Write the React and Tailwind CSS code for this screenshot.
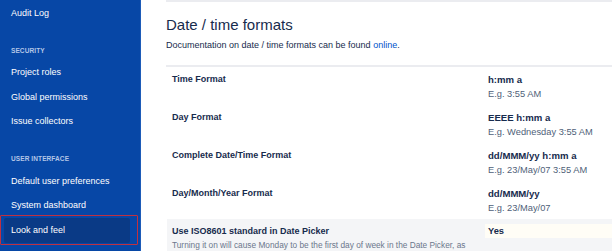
import React from "react";

const font = { fontFamily: '"Liberation Sans", Arial, sans-serif' };

function NavItem({ children, selected }) {
  return (
    <div
      className={
        "relative h-[24.5px] flex items-center pl-[7px] text-[9px] text-white rounded-[2px] " +
        (selected ? "bg-[#0a3a86]" : "")
      }
    >
      {children}
      {selected && (
        <div className="absolute left-[-4px] right-[-8px] top-[-3.5px] bottom-[-2px] border-[1.5px] border-[#c1303f] rounded-[1px] pointer-events-none" />
      )}
    </div>
  );
}

function NavHeading({ children }) {
  return (
    <div className="mt-[20px] mb-[5px] h-[10px] flex items-center pl-[7px] text-[6.5px] font-bold tracking-[0.1px] text-[#b3c6e6]">
      {children}
    </div>
  );
}

function Row({ label, value, example }) {
  return (
    <div className="flex h-[38px] pt-[6px] pb-[4px]">
      <div className="w-[319px] shrink-0 pl-[6px] text-[9px] font-bold text-[#172b4d] leading-[12px]">
        {label}
      </div>
      <div className="pl-[3px] leading-[14px]">
        <div className="text-[9.6px] font-bold text-[#172b4d]">{value}</div>
        <div className="text-[9.3px] text-[#505f79]">{example}</div>
      </div>
    </div>
  );
}

export default function App() {
  return (
    <div style={font} className="flex w-[612px] h-[251px] overflow-hidden bg-white">
      <div className="w-[141px] shrink-0 bg-[#0747a6] pt-[1px] pl-[4px] pr-[10px] border-r border-[#1d5bb8]">
        <NavItem>Audit Log</NavItem>
        <NavHeading>SECURITY</NavHeading>
        <NavItem>Project roles</NavItem>
        <NavItem>Global permissions</NavItem>
        <NavItem>Issue collectors</NavItem>
        <NavHeading>USER INTERFACE</NavHeading>
        <NavItem>Default user preferences</NavItem>
        <NavItem>System dashboard</NavItem>
        <NavItem selected>Look and feel</NavItem>
      </div>
      <div className="flex-1 min-w-0 pl-[25px]">
        <div className="h-[2px] bg-[#ebecf0]" />
        <div className="h-[65px] border-b-2 border-[#ebecf0]">
          <h1 className="pt-[12px] text-[15px] leading-[22px] text-[#172b4d]">
            Date / time formats
          </h1>
          <p className="mt-[2px] text-[9px] leading-[14px] text-[#172b4d]">
            Documentation on date / time formats can be found{" "}
            <span className="text-[#0052cc]">online</span>.
          </p>
        </div>
        <Row label="Time Format" value="h:mm a" example="E.g. 3:55 AM" />
        <Row label="Day Format" value="EEEE h:mm a" example="E.g. Wednesday 3:55 AM" />
        <Row
          label="Complete Date/Time Format"
          value="dd/MMM/yy h:mm a"
          example="E.g. 23/May/07 3:55 AM"
        />
        <Row label="Day/Month/Year Format" value="dd/MMM/yy" example="E.g. 23/May/07" />
        <div className="bg-[#f4f5f7] ml-[1px] pt-[5px] h-[40px]">
          <div className="flex">
            <div className="w-[318px] shrink-0 pl-[5px] text-[9px] font-bold text-[#172b4d] leading-[14px]">
              Use ISO8601 standard in Date Picker
            </div>
            <div className="flex-1 bg-[#fffdf6] pl-[3px] text-[9.3px] font-bold text-[#172b4d] leading-[14px]">
              Yes
            </div>
          </div>
          <div className="pl-[5px] whitespace-nowrap text-[8.3px] text-[#6b778c] leading-[14px]">
            Turning it on will cause Monday to be the first day of week in the Date Picker, as
          </div>
        </div>
      </div>
    </div>
  );
}
